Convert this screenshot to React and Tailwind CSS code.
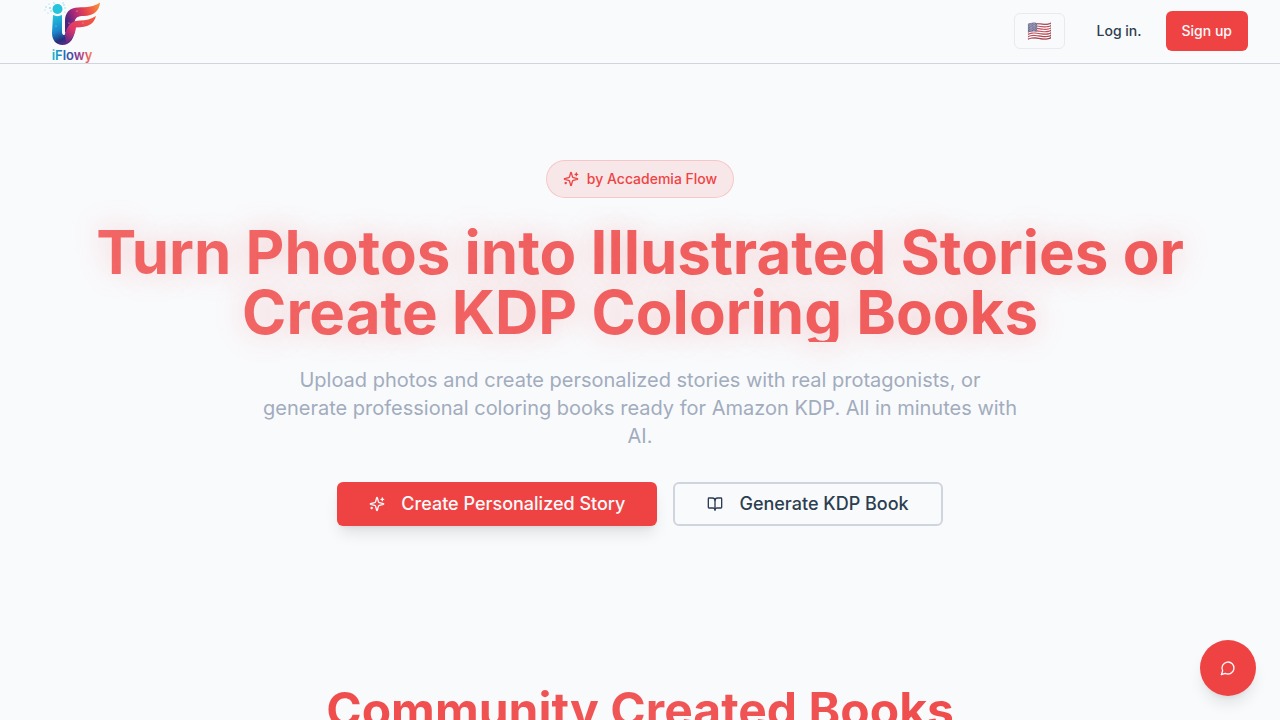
import React from "react";
import { BookOpen } from "lucide-react";

const dots = [
  { x: 6, y: 8, r: 0.7 },
  { x: 9, y: 5, r: 0.6 },
  { x: 11, y: 12, r: 0.8 },
  { x: 8, y: 14, r: 0.6 },
  { x: 23, y: 4, r: 0.7 },
  { x: 25, y: 9, r: 0.7 },
  { x: 25, y: 13, r: 0.6 },
  { x: 5, y: 11, r: 0.6 },
  { x: 10, y: 9, r: 0.9 },
  { x: 14, y: 4, r: 0.7 },
  { x: 24, y: 6, r: 0.7 },
];

const sparks = [
  { x: 29, y: 24, r: 0.6 },
  { x: 37, y: 12, r: 0.6 },
  { x: 43, y: 24, r: 0.5 },
  { x: 16, y: 27, r: 0.5 },
];

function Logo() {
  return (
    <svg viewBox="0 0 64 64" className="size-16" role="img" aria-label="iFlowy">
      <defs>
        <linearGradient id="stem" x1="14" y1="15" x2="28" y2="46" gradientUnits="userSpaceOnUse">
          <stop offset="0" stopColor="#22c8de" />
          <stop offset="0.5" stopColor="#1b86cc" />
          <stop offset="0.78" stopColor="#23307c" />
          <stop offset="1" stopColor="#6b2c8c" />
        </linearGradient>
        <linearGradient id="wing" x1="26" y1="20" x2="58" y2="6" gradientUnits="userSpaceOnUse">
          <stop offset="0" stopColor="#4b2480" />
          <stop offset="0.3" stopColor="#b02a78" />
          <stop offset="0.6" stopColor="#e8434c" />
          <stop offset="1" stopColor="#f98a3c" />
        </linearGradient>
        <linearGradient id="arm" x1="26" y1="44" x2="52" y2="20" gradientUnits="userSpaceOnUse">
          <stop offset="0" stopColor="#5a2788" />
          <stop offset="0.4" stopColor="#e0366c" />
          <stop offset="1" stopColor="#ef5a3e" />
        </linearGradient>
        <linearGradient id="word" x1="12" y1="0" x2="52" y2="0" gradientUnits="userSpaceOnUse">
          <stop offset="0" stopColor="#13bcd4" />
          <stop offset="0.35" stopColor="#2c5fae" />
          <stop offset="0.6" stopColor="#6b3a98" />
          <stop offset="0.85" stopColor="#e0506a" />
          <stop offset="1" stopColor="#f58a4b" />
        </linearGradient>
      </defs>
      {dots.map((dot) => (
        <circle key={`${dot.x}-${dot.y}`} cx={dot.x} cy={dot.y} r={dot.r} fill="#8fd6e4" />
      ))}
      <path
        d="M13 16 C16 17.5 19 17.5 22 16 V33 C22 37 26 37 26 32 L35 28 C35 39 30 46 22.5 46 C16 46 12 41 12 34 Z"
        fill="url(#stem)"
      />
      <path d="M25 34 V22 C25 13 30 9 38 8.5 C47 8 54 8 60 3.5 C59.5 12 53 17 44 17 C38 17 35 18 34.5 24 Z" fill="url(#wing)" />
      <path
        d="M25 35 C28 25 32 21.5 40 21.5 C46 21.5 51 20 56 17 C54 25 48 28.5 36 28.5 C35 36 32 40 27 44 C25 42 25 38 25 35 Z"
        fill="url(#arm)"
      />
      <circle cx="17.5" cy="10" r="5" fill="#25c3dc" />
      {sparks.map((spark) => (
        <circle key={`${spark.x}-${spark.y}`} cx={spark.x} cy={spark.y} r={spark.r} fill="#f9c3cf" />
      ))}
      <text x="32" y="61" textAnchor="middle" fontSize="13" fontWeight="600" fill="url(#word)">
        iFlowy
      </text>
    </svg>
  );
}

function SparklesIcon() {
  return (
    <svg
      viewBox="0 0 24 24"
      className="size-4"
      fill="none"
      stroke="currentColor"
      strokeWidth="2"
      strokeLinecap="round"
      strokeLinejoin="round"
      aria-hidden="true"
    >
      <path d="M9.937 15.5A2 2 0 0 0 8.5 14.063l-6.135-1.582a.5.5 0 0 1 0-.962L8.5 9.936A2 2 0 0 0 9.937 8.5l1.582-6.135a.5.5 0 0 1 .963 0L14.063 8.5A2 2 0 0 0 15.5 9.937l6.135 1.581a.5.5 0 0 1 0 .964L15.5 14.063a2 2 0 0 0-1.437 1.437l-1.582 6.135a.5.5 0 0 1-.963 0z" />
      <path d="M20 3v4" />
      <path d="M22 5h-4" />
      <path d="M4 17v2" />
      <path d="M5 18H3" />
    </svg>
  );
}

function ChatIcon() {
  return (
    <svg
      viewBox="0 0 24 24"
      className="size-4"
      fill="none"
      stroke="currentColor"
      strokeWidth="2"
      strokeLinecap="round"
      strokeLinejoin="round"
      aria-hidden="true"
    >
      <path d="M7.9 20A9 9 0 1 0 4 16.1L2 22Z" />
    </svg>
  );
}

function Header() {
  return (
    <header className="border-b border-[#d0d5dd]">
      <div className="flex h-[63px] items-center justify-between px-8 pb-px">
        <a href="/" className="ml-2 flex">
          <Logo />
        </a>
        <div className="flex items-center gap-4">
          <button
            type="button"
            aria-label="Language"
            className="flex h-9 items-center rounded-md border border-[#e8eaee] px-3 text-xl"
          >
            <span className="opacity-80">🇺🇸</span>
          </button>
          <div className="flex items-center gap-2">
            <a href="/login" className="flex h-10 items-center px-4 text-sm font-medium text-[#2c3e50]">
              Log in.
            </a>
            <a
              href="/signup"
              className="flex h-10 items-center rounded-md bg-[#ef4343] px-4 text-sm font-medium text-[#f8fafc]"
            >
              Sign up
            </a>
          </div>
        </div>
      </div>
    </header>
  );
}

function Hero() {
  return (
    <section className="flex flex-col items-center px-8 py-24 text-center">
      <div className="mb-6 flex items-center gap-2 rounded-full border border-[#ef4343]/20 bg-[#ef4343]/10 px-4 py-2 text-sm font-medium text-[#ef4343]">
        <SparklesIcon />
        <span>by Accademia Flow</span>
      </div>
      <h1 className="mb-6 bg-linear-to-r from-[#f36a6a] to-[#f15e5e] bg-clip-text text-6xl leading-none font-bold text-transparent text-shadow-[0_0_30px_rgb(239_67_67/0.25)]">
        Turn Photos into Illustrated Stories or Create KDP Coloring Books
      </h1>
      <p className="mb-8 max-w-3xl text-xl text-[#a1acbd]">
        Upload photos and create personalized stories with real protagonists, or generate professional coloring books
        ready for Amazon KDP. All in minutes with AI.
      </p>
      <div className="flex flex-wrap justify-center gap-4">
        <button
          type="button"
          className="flex h-11 items-center gap-4 rounded-md bg-[#ef4343] px-8 text-lg font-medium text-[#f8fafc] shadow-lg"
        >
          <SparklesIcon />
          Create Personalized Story
        </button>
        <button
          type="button"
          className="flex h-11 items-center gap-4 rounded-md border-2 border-[#d0d5dd] px-8 text-lg font-medium text-[#2c3e50]"
        >
          <BookOpen className="size-4" />
          Generate KDP Book
        </button>
      </div>
    </section>
  );
}

function Community() {
  return (
    <section className="px-8 py-16 text-center">
      <h2 className="bg-linear-to-r from-[#ef4343] via-[#f05656] to-[#ef4343] bg-clip-text text-5xl leading-none font-bold text-transparent">
        Community Created Books
      </h2>
    </section>
  );
}

export default function App() {
  return (
    <div className="min-h-screen bg-[#f9fafc] font-['Inter',sans-serif]">
      <Header />
      <main>
        <Hero />
        <Community />
      </main>
      <button
        type="button"
        aria-label="Open chat"
        className="fixed right-6 bottom-6 flex size-14 items-center justify-center rounded-full bg-[#ef4343] text-[#f8fafc] shadow-lg"
      >
        <ChatIcon />
      </button>
    </div>
  );
}
